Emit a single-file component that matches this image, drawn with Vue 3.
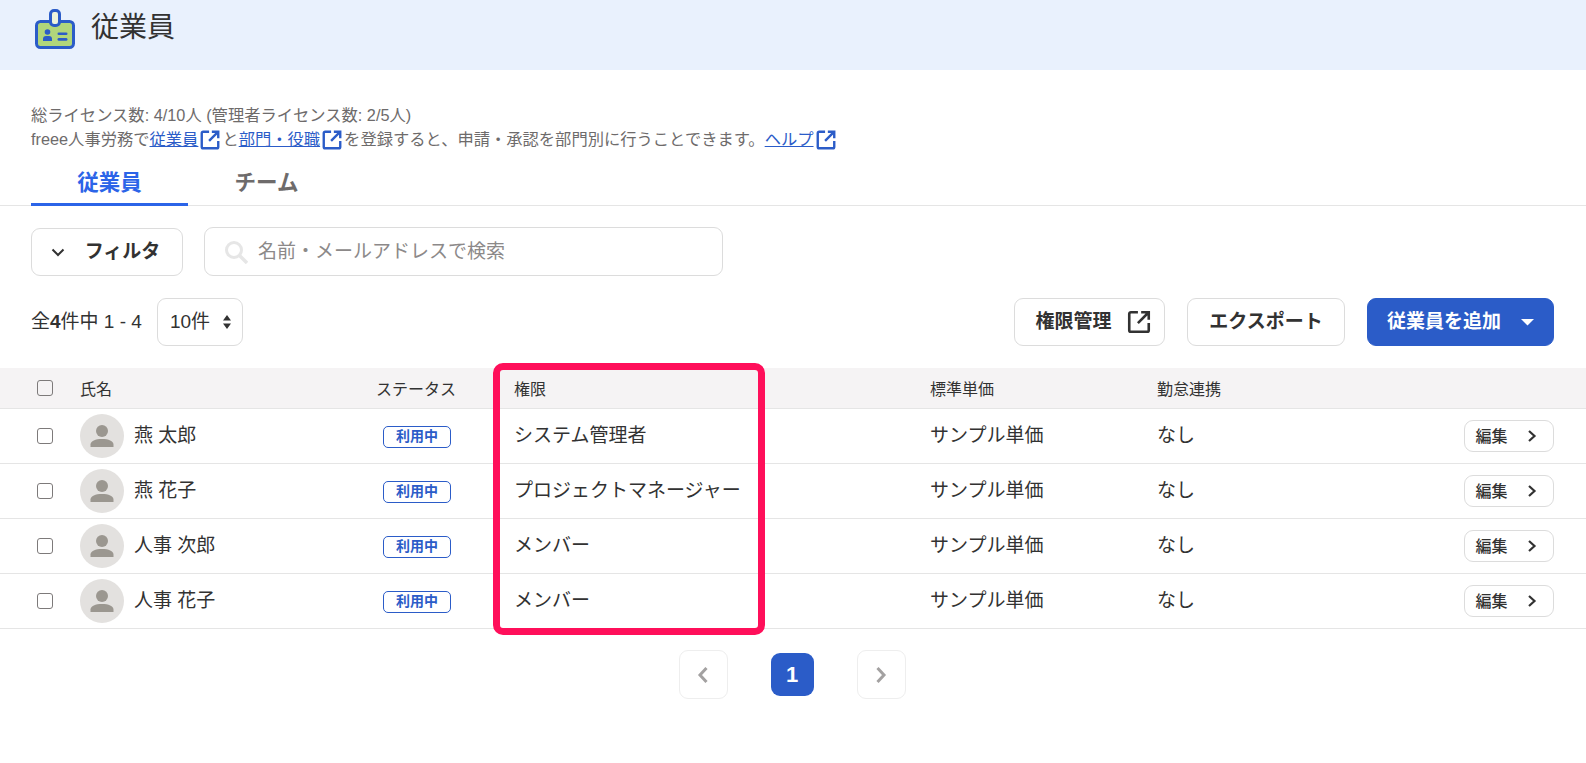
<script setup>
const members = [
  { name: '燕 太郎', role: 'システム管理者' },
  { name: '燕 花子', role: 'プロジェクトマネージャー' },
  { name: '人事 次郎', role: 'メンバー' },
  { name: '人事 花子', role: 'メンバー' },
]
const extPath = 'M11 3H4.500A1.500 1.500 0 0 0 3 4.500v15A1.500 1.500 0 0 0 4.500 21h15a1.500 1.500 0 0 0 1.500-1.500V13M14 3h7v7M20.500 3.500 11 13'
</script>

<template>
  <div class="page">
    <header class="page-head">
      <svg class="head-icon" viewBox="0 0 40 40" width="40" height="40">
        <rect x="1.500" y="12.500" width="37" height="26" rx="4" fill="#b1d67b" stroke="#2b5cc8" stroke-width="3" />
        <rect x="15.500" y="1.500" width="9" height="15" rx="3.500" fill="#eef3dc" stroke="#2b5cc8" stroke-width="3" />
        <circle cx="12.500" cy="23" r="2.800" fill="#2b5cc8" />
        <path d="M8 32v-2a3 3 0 0 1 3-3h3a3 3 0 0 1 3 3v2z" fill="#2b5cc8" />
        <rect x="22.500" y="23.500" width="10" height="2.600" rx="1.300" fill="#2b5cc8" />
        <rect x="22.500" y="29" width="10" height="2.800" rx="1.400" fill="#2b5cc8" />
      </svg>
      <h1>従業員</h1>
    </header>

    <div class="info">
      <div>総ライセンス数: 4/10人 (管理者ライセンス数: 2/5人)</div>
      <div class="info-line">
        <span>freee人事労務で</span><a>従業員</a>
        <svg class="ext" viewBox="0 0 24 24"><path :d="extPath" /></svg>
        <span>と</span><a>部門・役職</a>
        <svg class="ext" viewBox="0 0 24 24"><path :d="extPath" /></svg>
        <span>を登録すると、申請・承認を部門別に行うことできます。</span><a>ヘルプ</a>
        <svg class="ext" viewBox="0 0 24 24"><path :d="extPath" /></svg>
      </div>
    </div>

    <nav class="tabs">
      <div class="tab active">従業員</div>
      <div class="tab">チーム</div>
    </nav>

    <div class="filter-row">
      <button class="btn filter-btn">
        <svg viewBox="0 0 16 16" width="16" height="16"><path d="M2.500 5.500 8 11l5.500-5.500" fill="none" stroke="#323232" stroke-width="2" /></svg>
        <span class="lift">フィルタ</span>
      </button>
      <div class="search">
        <svg viewBox="0 0 24 24" width="24" height="24"><circle cx="10" cy="10" r="7.500" fill="none" stroke="#e6e6e6" stroke-width="3" /><path d="M15.500 15.500 23 23" stroke="#e6e6e6" stroke-width="3.400" /></svg>
        <span class="lift">名前・メールアドレスで検索</span>
      </div>
    </div>

    <div class="toolbar">
      <span class="count lift">全<b>4</b>件中 1 - 4</span>
      <div class="per-page">
        <span class="lift">10件</span>
        <svg viewBox="0 0 8 16" width="8" height="16"><path d="M4 1 8 6.500H0zM4 15 0 9.500h8z" fill="#323232" /></svg>
      </div>
      <div class="actions">
        <button class="btn action manage">
          <span class="lift">権限管理</span>
          <svg class="ext dark" viewBox="0 0 24 24"><path :d="extPath" /></svg>
        </button>
        <button class="btn action"><span class="lift">エクスポート</span></button>
        <button class="btn action primary">
          <span class="lift">従業員を追加</span>
          <svg viewBox="0 0 13 8" width="13" height="8"><path d="M0 1h13L6.500 7.500z" fill="#fff" /></svg>
        </button>
      </div>
    </div>

    <div class="table-wrap">
      <div class="row head">
        <div class="cell-check"><span class="checkbox"></span></div>
        <div class="name-head">氏名</div>
        <div>ステータス</div>
        <div>権限</div>
        <div>標準単価</div>
        <div>勤怠連携</div>
        <div></div>
      </div>
      <div v-for="m in members" :key="m.name" class="row">
        <div class="cell-check"><span class="checkbox"></span></div>
        <div class="name">
          <span class="avatar">
            <svg viewBox="0 0 44 44" width="44" height="44">
              <circle cx="22" cy="17" r="6" fill="#9b9790" />
              <path d="M10.500 33v-2.500c0-3.500 5-5.500 11.500-5.500s11.500 2 11.500 5.500V33z" fill="#9b9790" />
            </svg>
          </span>
          <span class="lift">{{ m.name }}</span>
        </div>
        <div><span class="badge">利用中</span></div>
        <div class="lift">{{ m.role }}</div>
        <div class="lift">サンプル単価</div>
        <div class="lift">なし</div>
        <div class="cell-edit">
          <button class="btn edit">
            <span>編集</span>
            <svg viewBox="0 0 12 14" width="12" height="14"><path d="M3 2 8.500 7 3 12" fill="none" stroke="#323232" stroke-width="2.200" /></svg>
          </button>
        </div>
      </div>
      <div class="highlight"></div>
    </div>

    <div class="pager">
      <button class="page-btn">
        <svg viewBox="0 0 12 18" width="12" height="18"><path d="M9.500 2 3 9l6.500 7" fill="none" stroke="#a3a1a1" stroke-width="3" /></svg>
      </button>
      <span class="page-current">1</span>
      <button class="page-btn">
        <svg viewBox="0 0 12 18" width="12" height="18"><path d="M2.500 2 9 9l-6.500 7" fill="none" stroke="#a3a1a1" stroke-width="3" /></svg>
      </button>
    </div>
  </div>
</template>

<style>
html, body {
  background: #fff;
}
</style>

<style scoped>
.page {
  font-family: "Liberation Sans", "Noto Sans CJK JP", sans-serif;
  color: #323232;
  font-size: 19px;
  height: 763px;
  overflow: hidden;
}
.lift {
  padding-bottom: 5px;
}
.page-head {
  height: 70px;
  background: #e9f1fd;
  display: flex;
  align-items: flex-start;
  padding-left: 35px;
  box-sizing: border-box;
}
.head-icon {
  margin-top: 9px;
}
.page-head h1 {
  margin: 8px 0 0 16px;
  font-size: 28px;
  line-height: 40px;
  font-weight: 400;
}
.info {
  padding: 33px 0 0 31px;
  font-size: 16.3px;
  line-height: 24px;
  color: #6e6b6b;
}
.info-line {
  display: flex;
  align-items: center;
}
.info a {
  color: #2b5cc8;
  text-decoration: underline;
}
.ext {
  width: 22px;
  height: 22px;
  margin: 2px 1px 0 1px;
  fill: none;
  stroke: #2b5cc8;
  stroke-width: 2.600;
}
.ext.dark {
  width: 26px;
  height: 26px;
  margin: 0 0 0 14px;
  stroke: #323232;
  stroke-width: 2.400;
}
.tabs {
  display: flex;
  margin-top: 6px;
  padding-left: 31px;
  border-bottom: 1px solid #e5e5e5;
  height: 48px;
}
.tab {
  width: 157px;
  text-align: center;
  font-size: 21.5px;
  font-weight: 700;
  line-height: 52px;
  color: #6e6b6b;
  box-sizing: border-box;
  height: 49px;
}
.tab.active {
  color: #2b64e8;
  border-bottom: 3px solid #2b64e8;
}
.filter-row {
  display: flex;
  gap: 21px;
  padding: 21px 0 0 31px;
}
.btn {
  font: inherit;
  font-weight: 700;
  color: #323232;
  background: #fff;
  border: 1px solid #dcdcdc;
  border-radius: 9px;
  display: inline-flex;
  align-items: center;
  justify-content: center;
  box-sizing: border-box;
  padding: 0;
}
.filter-btn {
  width: 152px;
  height: 48px;
  margin-top: 1px;
  gap: 19px;
  padding-right: 4px;
}
.search {
  width: 519px;
  height: 49px;
  border: 1px solid #dcdcdc;
  border-radius: 9px;
  box-sizing: border-box;
  display: flex;
  align-items: center;
  gap: 10px;
  padding-left: 19px;
  color: #8c8989;
}
.toolbar {
  display: flex;
  align-items: center;
  padding: 22px 32px 0 31px;
}
.count b {
  font-weight: 700;
}
.per-page {
  width: 86px;
  height: 48px;
  margin-left: 15px;
  border: 1px solid #dcdcdc;
  border-radius: 9px;
  box-sizing: border-box;
  display: flex;
  align-items: center;
  justify-content: space-between;
  padding: 0 11px 0 12px;
}
.actions {
  margin-left: auto;
  display: flex;
  gap: 22px;
}
.action {
  height: 48px;
  width: 151px;
}
.action.manage {
  padding-left: 8px;
}
.action:nth-child(2) {
  width: 158px;
}
.action.primary {
  width: 187px;
  background: #2b5cc8;
  border-color: #2b5cc8;
  color: #fff;
  gap: 20px;
}
.table-wrap {
  position: relative;
  margin-top: 22px;
}
.row {
  display: grid;
  grid-template-columns: 80px 296px 138px 416px 227px 1fr 122px;
  align-items: center;
  height: 55px;
  border-bottom: 1px solid #e5e5e5;
  box-sizing: border-box;
}
.row.head {
  height: 41px;
  background: #f5f3f4;
  font-size: 16px;
}
.cell-check {
  padding-left: 37px;
  display: flex;
}
.checkbox {
  width: 16px;
  height: 16px;
  border: 1.500px solid #7d7a7a;
  border-radius: 3px;
  box-sizing: border-box;
}
.name {
  display: flex;
  align-items: center;
  gap: 10px;
}
.avatar {
  width: 44px;
  height: 44px;
  border-radius: 50%;
  background: #e3e1df;
  display: block;
}
.avatar svg {
  display: block;
}
.badge {
  display: inline-block;
  margin-left: 7px;
  width: 68px;
  height: 22px;
  line-height: 19px;
  text-align: center;
  border: 1px solid #2b5cc8;
  border-radius: 5px;
  box-sizing: border-box;
  font-size: 14px;
  font-weight: 700;
  color: #2b5cc8;
}
.cell-edit {
  padding-right: 32px;
  display: flex;
  justify-content: flex-end;
}
.edit {
  width: 90px;
  height: 32px;
  font-size: 16px;
  font-weight: 500;
  gap: 18px;
  padding-right: 5px;
}
.edit span {
  padding-bottom: 2px;
}
.highlight {
  position: absolute;
  left: 493px;
  top: -5px;
  width: 272px;
  height: 272px;
  border: 7px solid #ff0f5a;
  border-radius: 10px;
  box-sizing: border-box;
}
.pager {
  display: flex;
  justify-content: center;
  align-items: center;
  gap: 43px;
  margin-top: 21px;
  padding-right: 2px;
}
.page-btn {
  width: 49px;
  height: 49px;
  background: #fff;
  border: 1px solid #eeeeee;
  border-radius: 9px;
  display: flex;
  align-items: center;
  justify-content: center;
  padding: 0;
}
.page-current {
  width: 43px;
  height: 43px;
  border-radius: 9px;
  background: #2b5cc8;
  color: #fff;
  font-weight: 700;
  text-align: center;
  line-height: 43px;
  font-size: 22px;
}
</style>
